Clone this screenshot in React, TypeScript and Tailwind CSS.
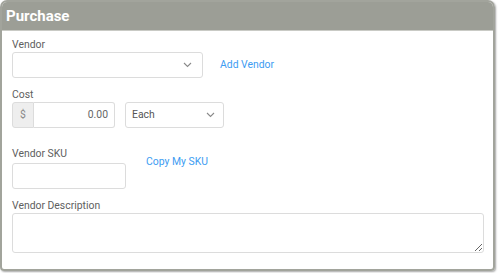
import React from "react";

function Chevron() {
  return (
    <svg width="9" height="6" viewBox="0 0 9 6" fill="none">
      <path d="M1 1l3.5 3.5L8 1" stroke="#8a8a8a" strokeWidth="1.1" />
    </svg>
  );
}

export default function App() {
  return (
    <div
      className="w-[500px] h-[273px] bg-white"
      style={{ fontFamily: "Roboto, 'Liberation Sans', sans-serif" }}
    >
      <div className="w-[495px] h-[271px] border-2 border-[#a2a49c] rounded-t-[7px] rounded-b-[4px] shadow-[1px_1px_2px_rgba(0,0,0,0.35)] overflow-hidden flex flex-col">
        <div className="h-[29px] bg-[#9c9e96] border-b border-[#c9cac5] flex items-center px-[4px]">
          <span className="text-white font-bold text-[15px] leading-none">Purchase</span>
        </div>
        <div className="flex-1 px-[10px] text-[10.4px] text-[#5e5e5e]">
          <div className="mt-[7px] h-[14px] leading-[14px]">Vendor</div>
          <div className="flex items-center">
            <div className="w-[191px] h-[26px] border border-[#dcdcdc] rounded-[3px] flex items-center justify-end pr-[10px]">
              <Chevron />
            </div>
            <span className="ml-[17px] text-[#3d9cf2]">Add Vendor</span>
          </div>
          <div className="mt-[10px] h-[14px] leading-[14px]">Cost</div>
          <div className="flex items-center">
            <div className="flex w-[103px] h-[26px]">
              <div className="w-[22px] bg-[#eeeeee] border border-[#dcdcdc] rounded-l-[3px] flex items-center justify-center text-[#888]">
                $
              </div>
              <div className="flex-1 border border-l-0 border-[#dcdcdc] rounded-r-[3px] flex items-center justify-end pr-[6px] text-[#666]">
                0.00
              </div>
            </div>
            <div className="ml-[10px] w-[99px] h-[26px] border border-[#dcdcdc] rounded-[3px] flex items-center justify-between pl-[6px] pr-[8px] text-[#555]">
              <span>Each</span>
              <Chevron />
            </div>
          </div>
          <div className="flex mt-[19px]">
            <div>
              <div className="h-[14px] leading-[14px]">Vendor SKU</div>
              <div className="mt-[2px] w-[114px] h-[26px] border border-[#dcdcdc] rounded-[3px]" />
            </div>
            <span className="ml-[20px] mt-[7px] text-[#3d9cf2]">Copy My SKU</span>
          </div>
          <div className="mt-[10px] h-[14px] leading-[14px]">Vendor Description</div>
          <textarea className="block w-[472px] h-[40px] border border-[#dcdcdc] rounded-[3px] outline-none" />
        </div>
      </div>
    </div>
  );
}
